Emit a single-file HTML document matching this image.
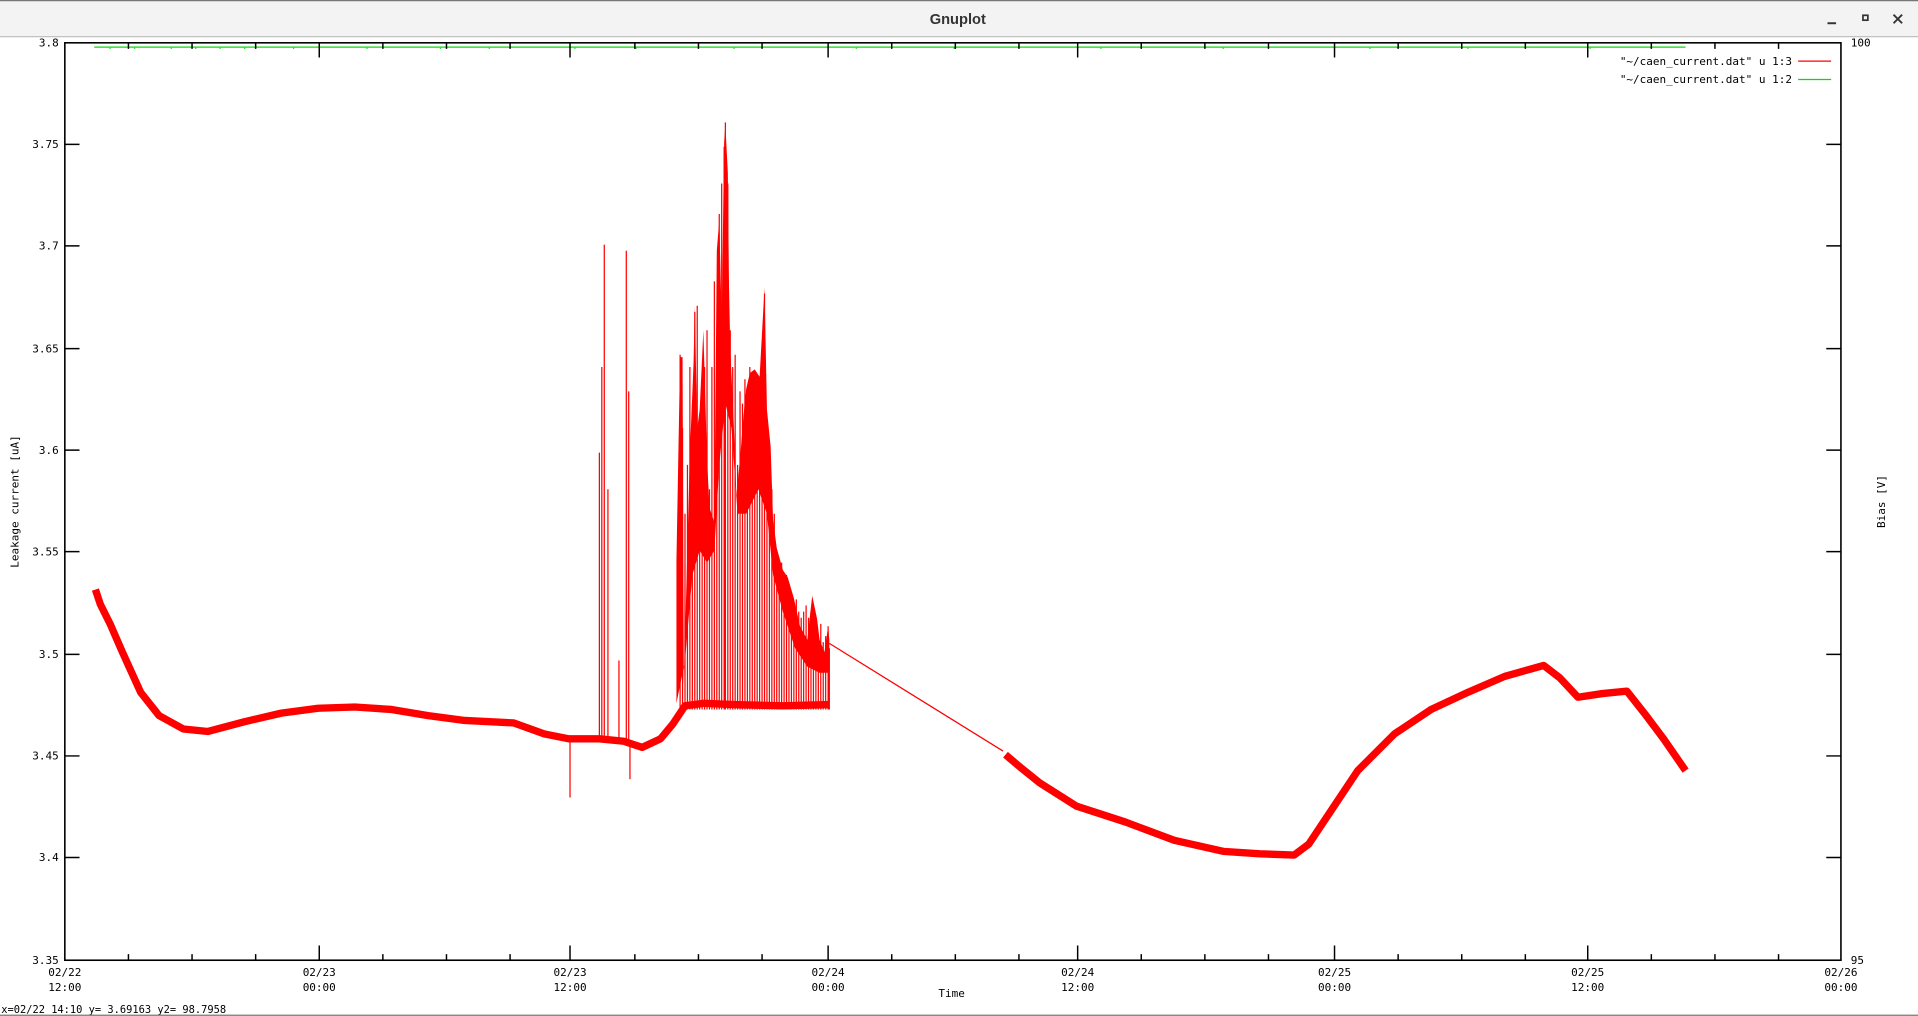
<!DOCTYPE html>
<html><head><meta charset="utf-8"><style>
html,body{margin:0;padding:0;background:#fff;width:1918px;height:1016px;overflow:hidden}
svg{display:block}
text{font-family:"DejaVu Sans Mono","Liberation Mono",monospace;font-size:9px;fill:#000}
</style></head><body>
<svg width="1918" height="1016" viewBox="0 0 1568 830.6" preserveAspectRatio="none">
<rect x="0" y="0" width="1568" height="30" fill="#f3f3f3"/>
<line x1="0" y1="0.5" x2="1568" y2="0.5" stroke="#777" stroke-width="1"/>
<line x1="0" y1="30" x2="1568" y2="30" stroke="#bbb" stroke-width="1"/>
<text x="783" y="19.5" text-anchor="middle" style="font-family:'Liberation Sans',sans-serif;font-size:12px;font-weight:bold;fill:#333">Gnuplot</text>
<line x1="1494" y1="19" x2="1501" y2="19" stroke="#333" stroke-width="1.6"/>
<rect x="1523" y="12.5" width="4" height="4" fill="none" stroke="#333" stroke-width="1.4"/>
<path d="M1548 12L1555 19M1555 12L1548 19" stroke="#333" stroke-width="1.5"/>

<line x1="77" y1="38.5" x2="1378" y2="38.5" stroke="#00e000" stroke-width="1"/>
<path d="M90 39v1M110 39v1M140 39v1M160 39v1M180 39v1M200 39v1M240 39v1M300 39v1M360 39v1M400 39v1M470 39v1M520 39v1M600 39v1M700 39v1M780 39v1M900 39v1M1000 39v1M1120 39v1M1200 39v1M1300 39v1" stroke="#00e000" stroke-width="1"/>

<path fill="none" stroke="#f00" stroke-width="6" stroke-linejoin="round" d="M78 482 L82 494 L90 510 L100 533 L115 566 L130 585 L150 596 L170 598 L200 590 L230 583 L260 579 L290 578 L320 580 L350 585 L380 589 L420 591 L445 600 L465 604 L490 604 L510 606 L525 611 L540 604 L550 592 L560 577 L575 575 L600 576 L640 577 L678 576"/>
<path fill="none" stroke="#f00" stroke-width="1" d="M678 526 L820 614"/>
<path fill="none" stroke="#f00" stroke-width="6" stroke-linejoin="round" d="M822 617 L835 628 L850 640 L880 659 L920 672 L960 687 L1000 696 L1030 698 L1058 699 L1070 690 L1090 660 L1110 630 L1140 600 L1170 580 L1200 566 L1230 553 L1262 544 L1275 554 L1290 570 L1310 567 L1330 565 L1345 584 L1360 604 L1378 630"/>
<!-- dense envelope -->
<polygon fill="#f00" points="553,458 556,292 558,292 559,560 564,370 567,297 568,251 570,350 572,335 575,270 578,375 580,415 584,427 586,205 588,180 590,262 592,116 593,102 595,141 596,235 597,285 600,350 602,405 605,375 608,338 610,318 613,305 617,302 621,308 625,235 627,335 630,365 632,425 635,448 640,466 644,472 649,489 654,512 660,523 664,487 668,506 670,523 674,533 677,512 678,523 678,550 670,550 660,545 650,530 640,500 632,470 627,420 620,400 610,420 603,420 598,350 593,330 588,380 584,450 578,460 572,450 566,470 560,540 553,575"/>
<path fill="none" stroke="#f00" stroke-width="1" d="M466 605V652M490 605V370M492 605V300M494 605V200M497 605V400M506 605V540M512 605V205M514 605V320M515 605V637
M556 580V290M558 580V350M560 580V420M562 580V380M564 580V300M566 580V420M568 580V255M570 580V250M572 580V380M574 580V340M576 580V300M578 580V270M580 580V400M582 580V300M584 580V230M586 580V330M588 580V175M590 580V150M592 580V120M593 580V100M595 580V150M597 580V270M599 580V300M601 580V290M603 580V380M605 580V320M607 580V330M609 580V310M611 580V350M613 580V300M615 580V310M617 580V305M619 580V340M621 580V330M623 580V300M625 580V240M627 580V360M629 580V380M631 580V400M633 580V420M635 580V450M637 580V470M639 580V460M641 580V480M643 580V470M645 580V480M647 580V490M649 580V500M651 580V490M653 580V500M655 580V505M657 580V500M659 580V495M661 580V505M663 580V500M665 580V500M667 580V515M669 580V520M671 580V510M673 580V525M675 580V520M677 580V512M678 580V530"/>

<rect x="53" y="35" width="1452" height="750" fill="none" stroke="#000" stroke-width="1.3"/>
<path stroke="#000" stroke-width="1.2" d="M53 118h12M53 201h12M53 285h12M53 368h12M53 451h12M53 535h12M53 618h12M53 701h12M1505 118h-12M1505 201h-12M1505 285h-12M1505 368h-12M1505 451h-12M1505 535h-12M1505 618h-12M1505 701h-12"/>
<path stroke="#000" stroke-width="1.2" d="M261 785v-12M466 785v-12M677 785v-12M881 785v-12M1091 785v-12M1298 785v-12M261 35v12M466 35v12M677 35v12M881 35v12M1091 35v12M1298 35v12
M105 785v-5M157 785v-5M209 785v-5M313 785v-5M365 785v-5M417 785v-5M519 785v-5M571 785v-5M623 785v-5M729 785v-5M781 785v-5M833 785v-5M933 785v-5M985 785v-5M1037 785v-5M1143 785v-5M1195 785v-5M1247 785v-5M1350 785v-5M1402 785v-5M1454 785v-5
M105 35v5M157 35v5M209 35v5M313 35v5M365 35v5M417 35v5M519 35v5M571 35v5M623 35v5M729 35v5M781 35v5M833 35v5M933 35v5M985 35v5M1037 35v5M1143 35v5M1195 35v5M1247 35v5M1350 35v5M1402 35v5M1454 35v5"/>
<g text-anchor="end">
<text x="48" y="38">3.8</text><text x="48" y="121">3.75</text><text x="48" y="204">3.7</text><text x="48" y="288">3.65</text><text x="48" y="371">3.6</text><text x="48" y="454">3.55</text><text x="48" y="538">3.5</text><text x="48" y="621">3.45</text><text x="48" y="704">3.4</text><text x="48" y="788">3.35</text>
</g>
<text x="1513" y="38">100</text><text x="1513" y="788">95</text>
<g text-anchor="middle">
<text x="53" y="798">02/22</text><text x="53" y="810">12:00</text>
<text x="261" y="798">02/23</text><text x="261" y="810">00:00</text>
<text x="466" y="798">02/23</text><text x="466" y="810">12:00</text>
<text x="677" y="798">02/24</text><text x="677" y="810">00:00</text>
<text x="881" y="798">02/24</text><text x="881" y="810">12:00</text>
<text x="1091" y="798">02/25</text><text x="1091" y="810">00:00</text>
<text x="1298" y="798">02/25</text><text x="1298" y="810">12:00</text>
<text x="1505" y="798">02/26</text><text x="1505" y="810">00:00</text>
<text x="778" y="815">Time</text>
</g>
<text transform="translate(15,410) rotate(-90)" text-anchor="middle">Leakage current [uA]</text>
<text transform="translate(1541,410) rotate(-90)" text-anchor="middle">Bias [V]</text>
<g text-anchor="end">
<text x="1465" y="53">"~/caen_current.dat" u 1:3</text>
<text x="1465" y="68">"~/caen_current.dat" u 1:2</text>
</g>
<line x1="1470" y1="50" x2="1497" y2="50" stroke="#f00" stroke-width="1"/>
<line x1="1470" y1="65" x2="1497" y2="65" stroke="#00e000" stroke-width="1"/>
<text x="1" y="828" style="font-size:8.5px">x=02/22 14:10 y= 3.69163 y2= 98.7958</text>
<line x1="0" y1="830" x2="1568" y2="830" stroke="#777" stroke-width="1"/>
</svg>
</body></html>
